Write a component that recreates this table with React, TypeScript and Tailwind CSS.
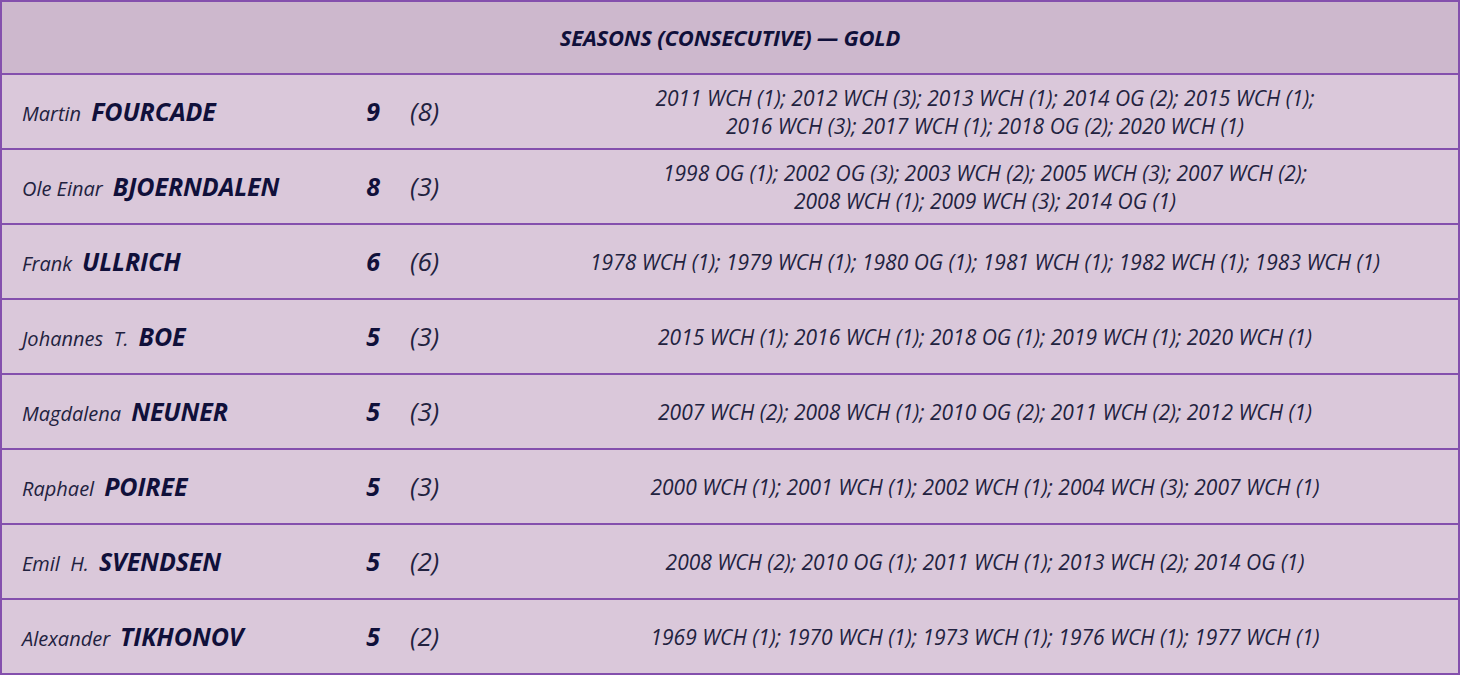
const rows = [
  { first: "Martin", last: "FOURCADE", n: 9, p: 8, lines: ["2011 WCH (1); 2012 WCH (3); 2013 WCH (1); 2014 OG (2); 2015 WCH (1);", "2016 WCH (3); 2017 WCH (1); 2018 OG (2); 2020 WCH (1)"] },
  { first: "Ole Einar", last: "BJOERNDALEN", n: 8, p: 3, lines: ["1998 OG (1); 2002 OG (3); 2003 WCH (2); 2005 WCH (3); 2007 WCH (2);", "2008 WCH (1); 2009 WCH (3); 2014 OG (1)"] },
  { first: "Frank", last: "ULLRICH", n: 6, p: 6, lines: ["1978 WCH (1); 1979 WCH (1); 1980 OG (1); 1981 WCH (1); 1982 WCH (1); 1983 WCH (1)"] },
  { first: "Johannes  T.", last: "BOE", n: 5, p: 3, lines: ["2015 WCH (1); 2016 WCH (1); 2018 OG (1); 2019 WCH (1); 2020 WCH (1)"] },
  { first: "Magdalena", last: "NEUNER", n: 5, p: 3, lines: ["2007 WCH (2); 2008 WCH (1); 2010 OG (2); 2011 WCH (2); 2012 WCH (1)"] },
  { first: "Raphael", last: "POIREE", n: 5, p: 3, lines: ["2000 WCH (1); 2001 WCH (1); 2002 WCH (1); 2004 WCH (3); 2007 WCH (1)"] },
  { first: "Emil  H.", last: "SVENDSEN", n: 5, p: 2, lines: ["2008 WCH (2); 2010 OG (1); 2011 WCH (1); 2013 WCH (2); 2014 OG (1)"] },
  { first: "Alexander", last: "TIKHONOV", n: 5, p: 2, lines: ["1969 WCH (1); 1970 WCH (1); 1973 WCH (1); 1976 WCH (1); 1977 WCH (1)"] },
];

export default function App() {
  return (
    <div className="w-[1460px] h-[675px] overflow-hidden bg-[#dac8da] font-['Open_Sans','Noto_Sans',sans-serif] italic text-[#1c1c3c]">
      <div className="border-2 border-b-0 border-[#8450ad]">
        <div className="h-[73px] bg-[#cdb8cd] border-b-2 border-[#8450ad] flex items-center justify-center">
          <span className="text-[22px] font-bold tracking-[-0.2px] text-[#10103a]">SEASONS (CONSECUTIVE) — GOLD</span>
        </div>
        {rows.map((r) => (
          <div key={r.last} className="h-[75px] border-b-2 border-[#8450ad] flex items-center">
            <div className="w-[340px] pl-[20px] flex items-baseline whitespace-pre">
              <span className="text-[20px] text-[#22223f]">{r.first}</span>
              <span className="ml-[10px] text-[25px] font-bold tracking-[-0.1px] text-[#10103a]">{r.last}</span>
            </div>
            <div className="w-[38px] text-right text-[25px] font-bold text-[#10103a]">{r.n}</div>
            <div className="w-[132px] pl-[30px] text-[26px] text-[#22223f]">({r.p})</div>
            <div className="flex-1 text-center text-[21px] leading-[28px] text-[#22223f]">
              {r.lines.map((l) => (
                <div key={l}>{l}</div>
              ))}
            </div>
          </div>
        ))}
      </div>
    </div>
  );
}
